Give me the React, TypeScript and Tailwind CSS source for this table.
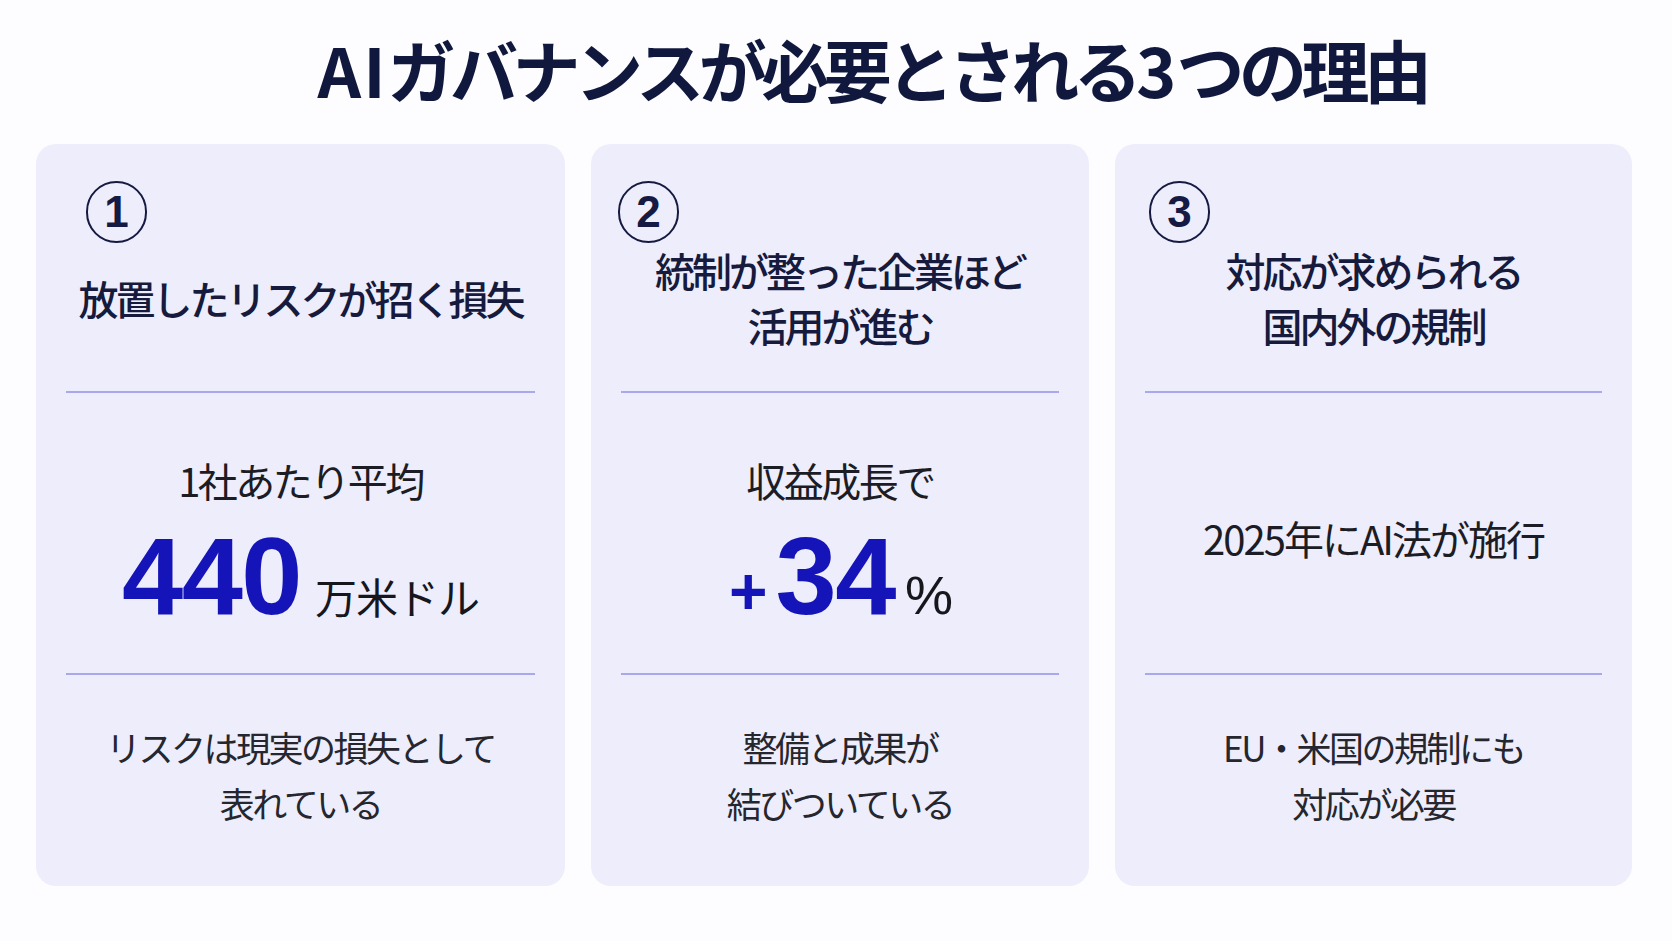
import React from 'react';

const jp = "font-['Noto_Sans_CJK_JP','Noto_Sans',sans-serif]";
const num = "font-['Liberation_Sans','Noto_Sans_CJK_JP',sans-serif]";

interface Reason {
  no: string;
  numClass: string;
  heading: string[];
  middle: React.ReactNode;
  bottom: string[];
}

const reasons: Reason[] = [
  {
    no: '1',
    numClass: 'ml-[50px]',
    heading: ['放置したリスクが招く損失'],
    middle: (
      <div className="mt-[25px] flex flex-col items-center">
        <p className={`${jp} text-[40px] leading-none tracking-[-2.5px] text-[#1c1c24]`}>1社あたり平均</p>
        <div className="mt-[21px] flex items-baseline">
          <span className={`${num} text-[110px] leading-none font-bold tracking-[-1.5px] text-[#1414b8]`}>440</span>
          <span className={`${jp} ml-[14px] text-[42px] leading-none tracking-[-1px] text-[#16161c]`}>万米ドル</span>
        </div>
      </div>
    ),
    bottom: ['リスクは現実の損失として', '表れている'],
  },
  {
    no: '2',
    numClass: 'ml-[27px]',
    heading: ['統制が整った企業ほど', '活用が進む'],
    middle: (
      <div className="mt-[25px] flex flex-col items-center">
        <p className={`${jp} text-[40px] leading-none tracking-[-2.5px] text-[#1c1c24]`}>収益成長で</p>
        <div className="mt-[21px] flex items-baseline">
          <span className={`${num} text-[66px] leading-none font-bold text-[#1414b8] -mb-[2px]`}>+</span>
          <span className={`${num} ml-[8px] text-[110px] leading-none font-bold tracking-[-1.5px] text-[#1414b8]`}>34</span>
          <span className={`${num} ml-[10px] text-[54px] leading-none tracking-[-2px] text-[#16161c]`}>%</span>
        </div>
      </div>
    ),
    bottom: ['整備と成果が', '結びついている'],
  },
  {
    no: '3',
    numClass: 'ml-[34px]',
    heading: ['対応が求められる', '国内外の規制'],
    middle: (
      <p className={`${jp} text-[40px] leading-none tracking-[-2px] text-[#1c1c24] mt-[10px]`}>2025年にAI法が施行</p>
    ),
    bottom: ['EU・米国の規制にも', '対応が必要'],
  },
];

const NumberBadge = ({ no, className }: { no: string; className: string }) => (
  <div
    className={`${className} w-[61px] h-[62px] rounded-full border-[2.5px] border-[#161a40] flex items-center justify-center`}
  >
    <span className={`${num} text-[44px] leading-none font-bold text-[#141a44]`}>{no}</span>
  </div>
);

const ReasonCard = ({ reason }: { reason: Reason }) => (
  <div className="bg-[#ededfb] rounded-[20px] flex flex-col pt-[37px] h-[742px]">
    <NumberBadge no={reason.no} className={reason.numClass} />

    {/* heading */}
    <div className="h-[110px] flex flex-col items-center justify-center">
      {reason.heading.map((line) => (
        <p
          key={line}
          className={`${jp} text-[40px] leading-[55px] tracking-[-3px] font-medium text-[#161a3c]`}
        >
          {line}
        </p>
      ))}
    </div>

    <div className="mt-[38px] mx-[30px] h-[2px] bg-[#a9a8ec]" />

    {/* figure */}
    <div className="h-[280px] flex items-center justify-center">{reason.middle}</div>

    <div className="mx-[30px] h-[2px] bg-[#a9a8ec]" />

    {/* note */}
    <div className="flex-1 flex flex-col items-center justify-center pb-[12px]">
      {reason.bottom.map((line) => (
        <p key={line} className={`${jp} text-[35px] leading-[56px] tracking-[-2.5px] text-[#26262e]`}>
          {line}
        </p>
      ))}
    </div>
  </div>
);

export default function App() {
  return (
    <div className="w-[1672px] h-[941px] bg-[#fdfdff] overflow-hidden">
      <div className="pt-[35px] pl-[72px] flex justify-center">
        <h1
          className={`${jp} text-[68px] leading-[68px] font-bold tracking-[-5.5px] text-[#10183e]`}
        >
          <span className="tracking-[2px]">AI</span>ガバナンスが必要とされる
          <span className="tracking-normal">3</span>つの理由
        </h1>
      </div>

      <div className="mt-[41px] ml-[36px] grid grid-cols-[529px_498px_517px] gap-[26px]">
        {reasons.map((r) => (
          <ReasonCard key={r.no} reason={r} />
        ))}
      </div>
    </div>
  );
}
